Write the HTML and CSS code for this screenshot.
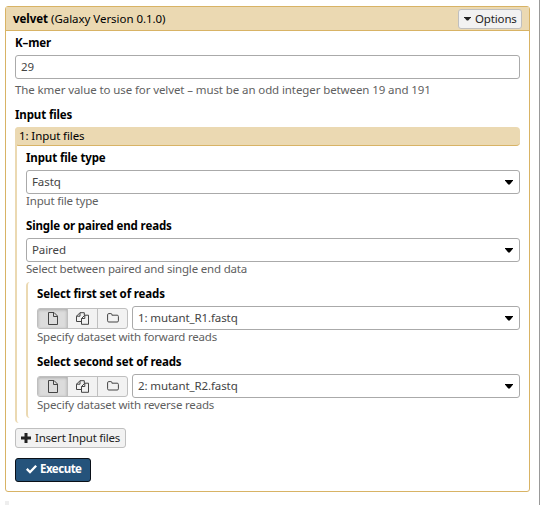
FILE: index.html
```
<!DOCTYPE html>
<html lang="en">
<head>
<meta charset="utf-8">
<title>velvet</title>
<link rel="stylesheet" href="styles.css">
</head>
<body>
<svg class="defs" width="0" height="0">
  <symbol id="file" viewBox="0 0 12 13"><path d="M1.500 .5h5.500l3.500 3.500v8.500h-9zM6.500 .5v4h4"/></symbol>
  <symbol id="files" viewBox="0 0 13 13"><path d="M5.500 9.500H.5V4.200L4 .7h4.300v2.600M4 .7v3.500H.5M5.500 12.300V6.500L8.800 3.200h3.700v9.100zM8.800 3.200v3.300H5.500"/></symbol>
  <symbol id="folder" viewBox="0 0 12 10"><path d="M.6 1.800Q.6.6 1.800.6h2.100q1 0 1 1v.6h5.300q1.200 0 1.200 1.200v4.400Q11.400 9 10.200 9H1.800Q.6 9 .6 7.800z"/></symbol>
</svg>
<main class="panel">
  <header class="panel-head">
    <span class="title"><b>velvet</b> (Galaxy Version 0.1.0)</span>
    <button class="btn options"><i class="caret"></i><span>Options</span></button>
  </header>
  <div class="panel-body">
    <div class="label">K–mer</div>
    <div class="field">29</div>
    <div class="help spaced">The kmer value to use for velvet – must be an odd integer between 19 and 191</div>
    <div class="label">Input files</div>
    <section class="repeat">
      <div class="repeat-head">1: Input files</div>
      <div class="repeat-body">
        <div class="label">Input file type</div>
        <div class="field">Fastq<i class="caret"></i></div>
        <div class="help">Input file type</div>
        <div class="label next">Single or paired end reads</div>
        <div class="field">Paired<i class="caret"></i></div>
        <div class="help">Select between paired and single end data</div>
        <div class="nested">
          <div class="label">Select first set of reads</div>
          <div class="row">
            <div class="group">
              <button class="active"><svg width="12" height="13"><use href="#file"/></svg></button>
              <button><svg width="13" height="13"><use href="#files"/></svg></button>
              <button><svg width="12" height="10"><use href="#folder"/></svg></button>
            </div>
            <div class="field">1: mutant_R1.fastq<i class="caret"></i></div>
          </div>
          <div class="help">Specify dataset with forward reads</div>
          <div class="label next">Select second set of reads</div>
          <div class="row">
            <div class="group">
              <button class="active"><svg width="12" height="13"><use href="#file"/></svg></button>
              <button><svg width="13" height="13"><use href="#files"/></svg></button>
              <button><svg width="12" height="10"><use href="#folder"/></svg></button>
            </div>
            <div class="field">2: mutant_R2.fastq<i class="caret"></i></div>
          </div>
          <div class="help">Specify dataset with reverse reads</div>
        </div>
      </div>
    </section>
    <button class="btn insert"><svg width="10" height="10" viewBox="0 0 10 10"><path d="M3.500 0h3v3.500H10v3H6.500V10h-3V6.500H0v-3h3.500z"/></svg><span>Insert Input files</span></button>
    <button class="btn execute"><svg width="11" height="9" viewBox="0 0 11 9"><path d="M0 4.700l1.600-1.600 2.400 2.300L9.300 0 11 1.600 4 8.800z"/></svg><span>Execute</span></button>
  </div>
</main>
<div class="next-block"></div>
</body>
</html>
```
FILE: styles.css
```
* { box-sizing: border-box; }

body {
  margin: 0;
  height: 505px;
  padding: 6px 9px 0 5px;
  overflow: hidden;
  border-right: 1px solid #999;
  background: #fff;
  color: #000;
  font: 11.5px/14px "Noto Sans", "Open Sans", sans-serif;
  letter-spacing: -0.1px;
  white-space: nowrap;
}

.defs { position: absolute; }

button { font: inherit; color: inherit; letter-spacing: inherit; margin: 0; padding: 0; }

.panel {
  height: 486px;
  border: 1px solid #d8b365;
  border-radius: 3px;
}

.panel-head {
  display: flex;
  align-items: center;
  justify-content: space-between;
  height: 24px;
  padding: 0 7px;
  background: #ebd9b2;
  border-bottom: 1px solid #d8b365;
}
.title { letter-spacing: -0.04px; }

.panel-body { padding: 0 9px; }

.label { height: 24px; line-height: 24px; font-weight: 700; letter-spacing: -0.13px; }
.label.next { margin-top: 6px; }

.field {
  display: flex;
  flex: 1;
  align-items: center;
  justify-content: space-between;
  height: 24px;
  padding: 0 6px 0 5px;
  border: 1px solid #aaa;
  border-radius: 3px;
  background: #fff;
  color: #444;
}

.caret {
  width: 8px;
  height: 5px;
  background: currentColor;
  clip-path: polygon(0 0, 100% 0, 100% 20%, 60% 100%, 40% 100%, 0 20%);
}
.field .caret { color: #000; }

.help { height: 14px; color: #5f5f5f; letter-spacing: -0.19px; }
.help.spaced { height: 24px; line-height: 22px; letter-spacing: -0.1px; }

.repeat { display: flow-root; position: relative; height: 296px; }
.repeat::before, .nested::before {
  content: "";
  position: absolute;
  inset: 0 auto 0 0;
  width: 5px;
  border-left: 2px solid #ebd9b2;
  border-radius: 4px 0 0 4px;
}
.repeat-head {
  height: 19px;
  padding-left: 4px;
  line-height: 18px;
  background: #ebd9b2;
  border-bottom: 1px solid #d8b365;
  border-radius: 4px;
}
.repeat-body { padding-left: 11px; }

.nested { position: relative; height: 136px; margin-top: 6px; padding-left: 11px; }

.row { display: flex; align-items: center; gap: 4px; height: 24px; }

.group {
  display: flex;
  width: 91px;
  height: 21px;
  border: 1px solid #bfbfbf;
  border-radius: 3px;
  background: #f2f2f2;
  overflow: hidden;
}
.group button {
  display: flex;
  flex: 1;
  align-items: center;
  justify-content: center;
  border: 0;
  border-left: 1px solid #bfbfbf;
  background: none;
}
.group button:first-child { border-left: 0; }
.group .active { background: #dcdcdc; box-shadow: inset 0 1px 3px #aaa; }
.group svg { fill: none; stroke: #444; stroke-width: 1; }

.btn {
  display: flex;
  align-items: center;
  height: 20px;
  border: 1px solid #bfbfbf;
  border-radius: 3px;
  background: #f2f2f2;
  color: #222;
}
.options { width: 64px; padding-left: 5px; gap: 4px; letter-spacing: -0.15px; }
.options .caret { width: 7px; height: 4px; }
.insert { width: 111px; margin-top: 5px; padding: 0 0 1px 5px; gap: 4px; letter-spacing: -0.22px; }
.execute {
  width: 76px;
  height: 24px;
  margin-top: 10px;
  padding: 0 0 2px 10px;
  gap: 3px;
  border-color: #0a1018;
  background: #25537b;
  color: #fff;
  font-weight: 700;
  letter-spacing: -0.5px;
}
.btn svg { fill: currentColor; }

.next-block { width: 4px; height: 4px; margin-top: 9px; background: #eee; }
```
